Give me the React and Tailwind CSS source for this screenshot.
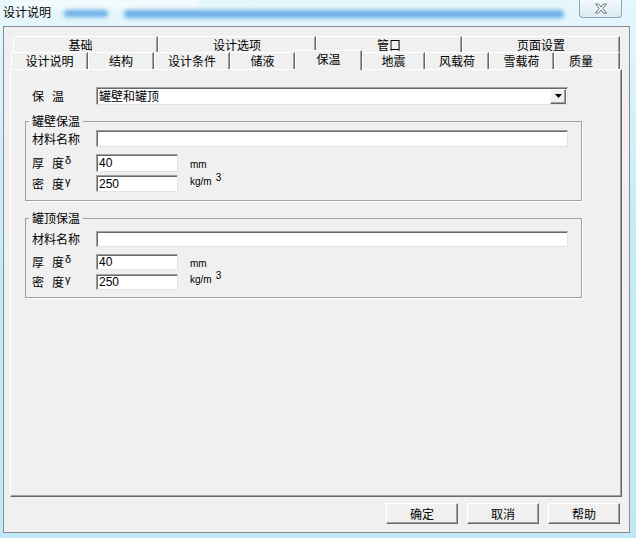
import React from 'react';

const cjk = "font-['Noto_Sans_CJK_SC',sans-serif]";
const latin = "font-['Liberation_Sans','Noto_Sans_CJK_SC',sans-serif]";

const topTabs = [
  { label: '基础', w: 'w-[145px] pr-[10px]' },
  { label: '设计选项', w: 'w-[158px]' },
  { label: '管口', w: 'w-[146px]' },
  { label: '页面设置', w: 'w-[158px]' },
];

const bottomTabs = [
  { label: '设计说明', w: 'w-[77px]' },
  { label: '结构', w: 'w-[66px]' },
  { label: '设计条件', w: 'w-[76px]' },
  { label: '储液', w: 'w-[65px]' },
  { label: '保温', w: 'w-[67px]', active: true },
  { label: '地震', w: 'w-[63px]' },
  { label: '风载荷', w: 'w-[64px]' },
  { label: '雪载荷', w: 'w-[65px]' },
  { label: '质量', w: 'w-[66px] pr-[12px]' },
];

const tabEdge =
  'flex items-center justify-center border-t border-l border-r border-t-white border-l-white border-r-[#696969] shadow-[inset_-1px_0_0_#a0a0a0] bg-[#f0f0f0]';

const sunken =
  'bg-white border border-t-[#a0a0a0] border-l-[#a0a0a0] border-r-[#e3e3e3] border-b-[#e3e3e3] shadow-[inset_1px_1px_0_#696969]';

const raised =
  'bg-[#f0f0f0] border border-t-white border-l-white border-r-[#696969] border-b-[#696969] shadow-[inset_-1px_-1px_0_#a0a0a0]';

const Input = ({ value, className }) => (
  <div className={`${sunken} ${className} flex items-center pl-[2px] text-[12px] leading-none ${latin}`}>{value}</div>
);

const SpacedLabel = ({ a, b, sub }) => (
  <div className="w-[64px] flex items-center text-[12px] leading-none">
    <span className="w-[20px]">{a}</span>
    <span>{b}</span>
    {sub && <span className={`text-[11px] -mt-[5px] ml-[1px] ${latin}`}>{sub}</span>}
  </div>
);

const Group = ({ title, pt, pb, h1, h2, h3, g1, g2 }) => (
  <fieldset className={`border border-[#a0a0a0] shadow-[1px_1px_0_#ffffff] pl-[6px] pr-[13px] ${pt} ${pb}`}>
    <legend className="-ml-[3px] px-[3px] text-[12px] leading-[16px]">{title}</legend>
    <div className={`flex items-center ${h1}`}>
      <div className="w-[64px] text-[12px] leading-none">材料名称</div>
      <Input className={`w-[472px] ${h1}`} value="" />
    </div>
    <div className={`flex items-center ${h2} ${g1}`}>
      <SpacedLabel a="厚" b="度" sub="δ" />
      <Input className={`w-[82px] ${h2}`} value="40" />
      <span className={`ml-[12px] mt-[3px] text-[10px] leading-none ${latin}`}>mm</span>
    </div>
    <div className={`flex items-center ${h3} ${g2}`}>
      <SpacedLabel a="密" b="度" sub="γ" />
      <Input className={`w-[82px] ${h3}`} value="250" />
      <span className={`ml-[12px] -mt-[4px] text-[10px] leading-none ${latin}`}>kg/m</span>
      <span className={`ml-[4px] -mt-[12px] text-[10px] leading-none ${latin}`}>3</span>
    </div>
  </fieldset>
);

export default function App() {
  return (
    <div className={`w-[636px] h-[538px] overflow-hidden bg-[linear-gradient(180deg,#e6f7fc_0%,#c4ecf9_40%,#bfe9f7_100%)] ${cjk} text-black`}>
      {/* title bar */}
      <div className="relative h-[26px] flex items-center pl-[3px]">
        <div className="absolute left-[10px] top-[0px] w-[190px] h-[8px] rounded-full bg-white/70 blur-[3px]" />
        <div className="absolute left-[64px] top-[10px] w-[44px] h-[7px] rounded-full bg-[#6aaee8] blur-[2px]" />
        <div className="absolute left-[124px] top-[10px] w-[440px] h-[8px] rounded-full bg-[#6aaee8] blur-[2px]" />
        <span className="relative text-[12px] leading-none pb-[2px] [text-shadow:0_0_4px_#ffffff]">设计说明</span>
        <div className="absolute left-[579px] top-0 w-[43px] h-[18px] rounded-b-[4px] border border-t-0 border-[#8aa6bc] bg-[linear-gradient(180deg,#f4f9fc_0%,#dcebf4_100%)] flex items-center justify-center">
          <svg width="14" height="11" viewBox="0 0 14 11">
            <path d="M1.5 1 H4.5 L7 4 L9.5 1 H12.5 L8.7 5.5 L12.5 10 H9.5 L7 7 L4.5 10 H1.5 L5.3 5.5 Z" fill="#ffffff" stroke="#5f6f7c" strokeWidth="1" strokeLinejoin="round" />
          </svg>
        </div>
      </div>

      {/* client area */}
      <div className="ml-[3px] w-[627px] h-[507px] border border-[#8a8a8a] bg-[#f0f0f0] pl-[6px] pt-[9px]">
        <div className="w-[612px]">
          <div className="flex ml-[3px] h-[16px]">
            {topTabs.map((t) => (
              <div key={t.label} className={`${tabEdge} ${t.w} h-[16px] text-[12px] leading-none`}>
                {t.label}
              </div>
            ))}
          </div>
          <div className="flex items-end ml-[1px] h-[17px]">
            {bottomTabs.map((t) =>
              t.active ? (
                <div
                  key={t.label}
                  className={`${tabEdge} ${t.w} h-[20px] -mb-[1px] relative z-10 pb-[3px] text-[12px] leading-none`}
                >
                  {t.label}
                </div>
              ) : (
                <div key={t.label} className={`${tabEdge} ${t.w} h-[17px] text-[12px] leading-none`}>
                  {t.label}
                </div>
              )
            )}
          </div>

          {/* panel */}
          <div className={`${raised} w-[612px] h-[428px] pl-[14px]`}>
            <div className="flex items-center h-[18px] mt-[17px] pl-[7px]">
              <SpacedLabel a="保" b="温" />
              <div className={`${sunken} w-[472px] h-[18px] flex items-center justify-between pl-[2px] pr-[1px]`}>
                <span className="text-[12px] leading-none">罐壁和罐顶</span>
                <div className={`${raised} w-[16px] h-[15px] flex items-center justify-center`}>
                  <svg width="7" height="4" viewBox="0 0 7 4">
                    <path d="M0 0 H7 L3.5 4 Z" fill="#000000" />
                  </svg>
                </div>
              </div>
            </div>

            <div className="w-[556px] mt-[8px]">
              <Group title="罐壁保温" pt="pt-[1px]" pb="pb-[8px]" h1="h-[17px]" h2="h-[18px]" h3="h-[17px]" g1="mt-[7px]" g2="mt-[3px]" />
            </div>
            <div className="w-[556px] mt-[9px]">
              <Group title="罐顶保温" pt="pt-[5px]" pb="pb-[7px]" h1="h-[16px]" h2="h-[16px]" h3="h-[16px]" g1="mt-[7px]" g2="mt-[4px]" />
            </div>
          </div>

          {/* buttons */}
          <div className="flex justify-end gap-[9px] mt-[6px] pr-[2px]">
            {['确定', '取消', '帮助'].map((b) => (
              <div key={b} className={`${raised} w-[72px] h-[21px] flex items-center justify-center text-[12px] leading-none`}>
                {b}
              </div>
            ))}
          </div>
        </div>
      </div>
    </div>
  );
}
